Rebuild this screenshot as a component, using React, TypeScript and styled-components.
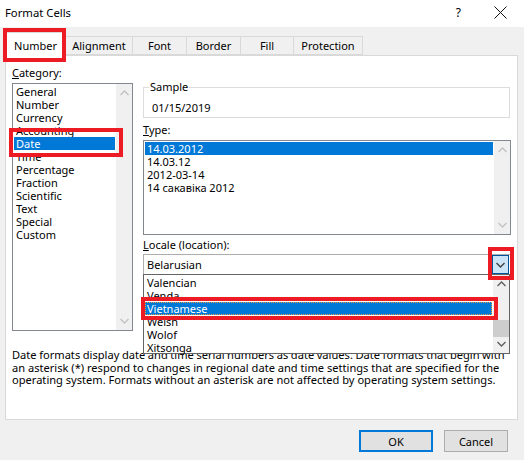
import React from "react";
import styled, { createGlobalStyle } from "styled-components";

const CATEGORIES = [
  "General",
  "Number",
  "Currency",
  "Accounting",
  "Date",
  "Time",
  "Percentage",
  "Fraction",
  "Scientific",
  "Text",
  "Special",
  "Custom",
];

const TYPES = ["14.03.2012", "14.03.12", "2012-03-14", "14 сакавіка 2012"];

const LOCALES = ["Valencian", "Venda", "Vietnamese", "Welsh", "Wolof", "Xitsonga"];

const TABS = [
  { label: "Number", width: 61 },
  { label: "Alignment", width: 67 },
  { label: "Font", width: 55 },
  { label: "Border", width: 55 },
  { label: "Fill", width: 54 },
  { label: "Protection", width: 70 },
];

const Chevron = ({ up, color }: { up?: boolean; color: string }) => (
  <svg width="9" height="6" viewBox="0 0 9 6">
    <polyline
      points={up ? "0.5,5 4.5,1 8.5,5" : "0.5,1 4.5,5 8.5,1"}
      fill="none"
      stroke={color}
      strokeWidth="1.4"
    />
  </svg>
);

const App = () => {
  return (
    <>
      <GlobalStyle />
      <Dialog>
        <TitleBar>
          <Title>Format Cells</Title>
          <TitleButtons>
            <Help>?</Help>
            <svg width="13" height="13" viewBox="0 0 13 13">
              <path d="M0.5 0.5 L12.5 12.5 M12.5 0.5 L0.5 12.5" stroke="#111" strokeWidth="1" />
            </svg>
          </TitleButtons>
        </TitleBar>

        <Tabs>
          {TABS.map((t, i) => (
            <Tab key={t.label} $active={i === 0} $width={t.width}>
              {t.label}
              {i === 0 && <Callout $top={-5} $right={-1} $bottom={-6} $left={-3} />}
            </Tab>
          ))}
        </Tabs>

        <Panel>
          <Columns>
            <LeftColumn>
              <Label>
                <u>C</u>ategory:
              </Label>
              <ListBox $height={248}>
                <ListItems>
                  {CATEGORIES.map((c) => (
                    <Item key={c} $selected={c === "Date"}>
                      {c}
                      {c === "Date" && <Callout $top={-9} $right={-8} $bottom={-7} $left={-5} />}
                    </Item>
                  ))}
                </ListItems>
                <ScrollBar>
                  <Chevron up color="#c2c2c2" />
                  <Chevron color="#c2c2c2" />
                </ScrollBar>
              </ListBox>
            </LeftColumn>

            <RightColumn>
              <GroupBox>
                <Legend>Sample</Legend>
                <SampleValue>01/15/2019</SampleValue>
              </GroupBox>

              <Label $gap={5}>
                <u>T</u>ype:
              </Label>
              <ListBox $height={95}>
                <ListItems>
                  {TYPES.map((t, i) => (
                    <Item key={t} $selected={i === 0}>
                      {t}
                    </Item>
                  ))}
                </ListItems>
                <ScrollBar>
                  <Chevron up color="#c2c2c2" />
                  <Chevron color="#c2c2c2" />
                </ScrollBar>
              </ListBox>

              <Label $gap={3}>
                <u>L</u>ocale (location):
              </Label>
              <Combo>
                <ComboText>Belarusian</ComboText>
                <ComboButton>
                  <Chevron color="#404040" />
                  <Callout $top={-9} $right={-6} $bottom={-7} $left={-5} />
                </ComboButton>
                <DropList>
                  <ListItems>
                    {LOCALES.map((l) => (
                      <Item key={l} $selected={l === "Vietnamese"} $focus={l === "Vietnamese"}>
                        {l}
                        {l === "Vietnamese" && (
                          <Callout $top={-6} $right={-7} $bottom={-6} $left={-5} />
                        )}
                      </Item>
                    ))}
                  </ListItems>
                  <ScrollBar>
                    <Chevron up color="#606060" />
                    <Thumb />
                    <Chevron color="#606060" />
                  </ScrollBar>
                </DropList>
              </Combo>
            </RightColumn>
          </Columns>

          <Description>
            <Line $spacing={-0.3}>
              Date formats display date and time serial numbers as date values. Date formats that begin with
            </Line>
            <Line $spacing={0}>
              an asterisk (*) respond to changes in regional date and time settings that are specified for the
            </Line>
            <Line $spacing={0}>
              operating system. Formats without an asterisk are not affected by operating system settings.
            </Line>
          </Description>
        </Panel>

        <Footer>
          <Button $default $width={74}>OK</Button>
          <Button $width={64}>Cancel</Button>
        </Footer>
      </Dialog>
    </>
  );
};

export default App;

const GlobalStyle = createGlobalStyle`
  html, body {
    margin: 0;
    padding: 0;
  }
  body {
    width: 524px;
    height: 460px;
    overflow: hidden;
    background: #f0f0f0;
    font-family: "Noto Sans", "Liberation Sans", sans-serif;
    font-size: 11px;
    color: #000;
  }
`;

const Dialog = styled.div`
  width: 524px;
  height: 460px;
  display: flex;
  flex-direction: column;
  background: #f0f0f0;
`;

const TitleBar = styled.div`
  height: 27px;
  flex: none;
  display: flex;
  align-items: center;
  justify-content: space-between;
  padding: 0 17px 0 5px;
  background: #fff;
`;

const Title = styled.span`
  font-size: 11.3px;
  margin-top: -3px;
`;

const TitleButtons = styled.div`
  display: flex;
  align-items: center;
  gap: 33px;
  margin-top: -3px;
`;

const Help = styled.span`
  font-size: 12px;
`;

const Tabs = styled.div`
  flex: none;
  display: flex;
  align-items: flex-end;
  height: 22px;
  margin-top: 6px;
  padding-left: 5px;
  position: relative;
  z-index: 2;
`;

const Tab = styled.div<{ $active?: boolean; $width: number }>`
  position: relative;
  box-sizing: border-box;
  width: ${(p) => p.$width}px;
  height: ${(p) => (p.$active ? 24 : 19)}px;
  margin-bottom: ${(p) => (p.$active ? -1 : 0)}px;
  margin-left: ${(p) => (p.$active ? 0 : -1)}px;
  display: flex;
  align-items: center;
  justify-content: center;
  padding-top: ${(p) => (p.$active ? 1 : 0)}px;
  background: ${(p) => (p.$active ? "#fff" : "#f0f0f0")};
  border: 1px solid #d9d9d9;
  border-bottom: ${(p) => (p.$active ? "none" : "1px solid #d9d9d9")};
  &:nth-child(2) {
    margin-left: 0;
    border-left: none;
  }
`;

const Callout = styled.div<{ $top: number; $right: number; $bottom: number; $left: number }>`
  position: absolute;
  top: ${(p) => p.$top}px;
  right: ${(p) => p.$right}px;
  bottom: ${(p) => p.$bottom}px;
  left: ${(p) => p.$left}px;
  border: 4px solid #ed1c24;
  pointer-events: none;
  z-index: 5;
`;

const Panel = styled.div`
  position: relative;
  box-sizing: border-box;
  height: 365px;
  flex: none;
  margin: 0 6px 0 5px;
  background: #fff;
  border: 1px solid #d9d9d9;
  padding: 10px 0 0 6px;
`;

const Columns = styled.div`
  display: grid;
  grid-template-columns: 121px 368px;
  column-gap: 10px;
`;

const LeftColumn = styled.div`
  display: flex;
  flex-direction: column;
`;

const RightColumn = styled.div`
  display: flex;
  flex-direction: column;
  padding-top: 14px;
`;

const Label = styled.div<{ $gap?: number }>`
  line-height: 14px;
  height: 14px;
  margin-top: ${(p) => p.$gap ?? 0}px;
  margin-bottom: 3px;
  u {
    text-decoration: underline;
    text-underline-offset: 1px;
  }
`;

const ListBox = styled.div<{ $height: number }>`
  box-sizing: border-box;
  height: ${(p) => p.$height}px;
  border: 1px solid #828790;
  display: flex;
  background: #fff;
  position: relative;
`;

const ListItems = styled.div`
  flex: 1;
  min-width: 0;
  padding: 1px 1px 0 1px;
`;

const Item = styled.div<{ $selected?: boolean; $focus?: boolean }>`
  position: relative;
  box-sizing: border-box;
  height: 13px;
  padding-left: ${(p) => (p.$focus ? 1 : 2)}px;
  white-space: nowrap;
  background: ${(p) => (p.$selected ? "#0078d7" : "transparent")};
  color: ${(p) => (p.$selected ? "#fff" : "#000")};
  border: ${(p) => (p.$focus ? "1px dotted #e8a040" : "none")};
  line-height: ${(p) => (p.$focus ? 11 : 13)}px;
`;

const ScrollBar = styled.div`
  width: 16px;
  flex: none;
  background: #f0f0f0;
  display: flex;
  flex-direction: column;
  align-items: center;
  justify-content: space-between;
  padding: 6px 0 6px;
  box-sizing: border-box;
`;

const Thumb = styled.div`
  width: 16px;
  height: 17px;
  background: #cdcdcd;
  margin-top: auto;
  margin-bottom: 4px;
`;

const GroupBox = styled.fieldset`
  margin: 0 1px 0 0;
  padding: 0 8px 2px 8px;
  border: 1px solid #dcdcdc;
  min-width: 0;
`;

const Legend = styled.legend`
  padding: 0 1px;
  margin-left: -3px;
  line-height: 14px;
`;

const SampleValue = styled.div`
  margin-top: 7px;
  line-height: 14px;
`;

const Combo = styled.div`
  position: relative;
  box-sizing: border-box;
  height: 21px;
  margin-top: -1px;
  border: 1px solid #adadad;
  display: flex;
  align-items: center;
  background: #fff;
`;

const ComboText = styled.div`
  flex: 1;
  padding-left: 3px;
`;

const ComboButton = styled.div`
  position: relative;
  box-sizing: border-box;
  width: 17px;
  height: 19px;
  margin-right: 1px;
  background: #cce4f7;
  border: 1px solid #005499;
  display: flex;
  align-items: center;
  justify-content: center;
`;

const DropList = styled.div`
  position: absolute;
  z-index: 4;
  top: 19px;
  left: -1px;
  width: 367px;
  height: 80px;
  box-sizing: border-box;
  border: 1px solid #646464;
  background: #fff;
  display: flex;
`;

const Description = styled.div`
  margin-top: 18px;
  font-size: 11.1px;
`;

const Line = styled.div<{ $spacing: number }>`
  line-height: 12.5px;
  white-space: nowrap;
  word-spacing: ${(p) => p.$spacing}px;
`;

const Footer = styled.div`
  flex: 1;
  display: flex;
  justify-content: flex-end;
  align-items: flex-start;
  gap: 11px;
  padding: 10px 16px 0 0;
`;

const Button = styled.div<{ $default?: boolean; $width: number }>`
  box-sizing: border-box;
  width: ${(p) => p.$width}px;
  height: 22px;
  display: flex;
  align-items: center;
  justify-content: center;
  background: #e1e1e1;
  border: ${(p) => (p.$default ? "2px solid #0078d7" : "1px solid #adadad")};
`;
